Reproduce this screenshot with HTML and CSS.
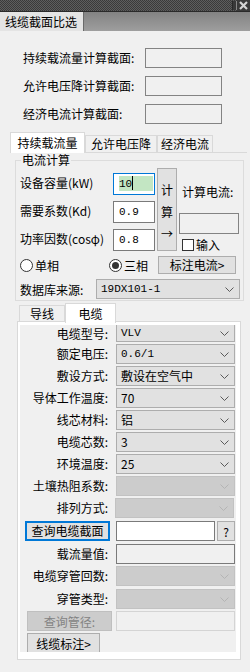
FILE: index.html
```html
<!DOCTYPE html>
<html lang="zh-CN">
<head>
    <meta charset="UTF-8">
    <meta name="viewport" content="width=device-width, initial-scale=1.0">
    <title>线缆截面比选</title>
    <link rel="stylesheet" href="styles.css">
</head>
<body>
    <div class="titlebar">
        <div class="grip"></div>
        <div class="sep"></div>
        <div class="close">
            <svg width="9" height="9" viewBox="0 0 9 9"><path d="M1 1L8 8M8 1L1 8" stroke="#d4d4d4" stroke-width="2.2"/></svg>
        </div>
    </div>
    <div class="doc-tabs">
        <div class="doc-tab">线缆截面比选</div>
        <div class="doc-rest"></div>
    </div>

    <div class="summary">
        <div class="sum-row"><span class="sum-label">持续载流量计算截面:</span><div class="ro-box"></div></div>
        <div class="sum-row"><span class="sum-label">允许电压降计算截面:</span><div class="ro-box"></div></div>
        <div class="sum-row third"><span class="sum-label">经济电流计算截面:</span><div class="ro-box"></div></div>
    </div>

    <div class="tabs top-tabs">
        <div class="tab active" style="width:75px">持续载流量</div>
        <div class="tab" style="width:72px">允许电压降</div>
        <div class="tab" style="width:56px">经济电流</div>
    </div>
    <div class="calc-page">
        <fieldset class="group">
            <legend>电流计算</legend>
            <div class="calc">
                <div class="calc-fields">
                    <label>设备容量(kW)</label>
                    <div class="num-input focus"><span class="sel">10</span><span class="caret"></span></div>
                    <label>需要系数(Kd)</label>
                    <div class="num-input">0.9</div>
                    <label>功率因数(cosφ)</label>
                    <div class="num-input">0.8</div>
                </div>
                <button class="calc-btn"><span>计</span><span>算</span><span>→</span></button>
                <div class="calc-result">
                    <div class="result-label">计算电流:</div>
                    <div class="result-box"></div>
                    <div class="check"><span class="cb"></span>输入</div>
                </div>
            </div>
            <div class="phase-row">
                <div class="radio"><span class="dot"></span>单相</div>
                <div class="radio second"><span class="dot on"></span>三相</div>
                <button class="btn mark-btn">标注电流&gt;</button>
            </div>
            <div class="db-row">
                <span class="db-label">数据库来源:</span>
                <div class="combo db-combo"><span class="mono">19DX101-1</span><svg class="chev" width="9" height="5" viewBox="0 0 9 5"><path d="M0.5 0.5L4.5 4.5L8.5 0.5" fill="none" stroke="#5a5a5a"/></svg></div>
            </div>
        </fieldset>
    </div>

    <div class="tabs cable-tabs">
        <div class="tab" style="width:46px">导线</div>
        <div class="tab active" style="width:51px">电缆</div>
    </div>
    <div class="cable-page">
        <div class="cable-panel">
            <div class="rows">
                <div class="row first"><span class="lbl">电缆型号:</span>
                    <div class="combo"><span class="mono">VLV</span><svg class="chev" width="9" height="5" viewBox="0 0 9 5"><path d="M0.5 0.5L4.5 4.5L8.5 0.5" fill="none" stroke="#5a5a5a"/></svg></div></div>
                <div class="row"><span class="lbl">额定电压:</span>
                    <div class="combo"><span class="mono">0.6/1</span><svg class="chev" width="9" height="5" viewBox="0 0 9 5"><path d="M0.5 0.5L4.5 4.5L8.5 0.5" fill="none" stroke="#5a5a5a"/></svg></div></div>
                <div class="row"><span class="lbl">敷设方式:</span>
                    <div class="combo"><span>敷设在空气中</span><svg class="chev" width="9" height="5" viewBox="0 0 9 5"><path d="M0.5 0.5L4.5 4.5L8.5 0.5" fill="none" stroke="#5a5a5a"/></svg></div></div>
                <div class="row"><span class="lbl">导体工作温度:</span>
                    <div class="combo"><span>70</span><svg class="chev" width="9" height="5" viewBox="0 0 9 5"><path d="M0.5 0.5L4.5 4.5L8.5 0.5" fill="none" stroke="#5a5a5a"/></svg></div></div>
                <div class="row"><span class="lbl">线芯材料:</span>
                    <div class="combo"><span>铝</span><svg class="chev" width="9" height="5" viewBox="0 0 9 5"><path d="M0.5 0.5L4.5 4.5L8.5 0.5" fill="none" stroke="#5a5a5a"/></svg></div></div>
                <div class="row"><span class="lbl">电缆芯数:</span>
                    <div class="combo"><span>3</span><svg class="chev" width="9" height="5" viewBox="0 0 9 5"><path d="M0.5 0.5L4.5 4.5L8.5 0.5" fill="none" stroke="#5a5a5a"/></svg></div></div>
                <div class="row"><span class="lbl">环境温度:</span>
                    <div class="combo"><span>25</span><svg class="chev" width="9" height="5" viewBox="0 0 9 5"><path d="M0.5 0.5L4.5 4.5L8.5 0.5" fill="none" stroke="#5a5a5a"/></svg></div></div>
                <div class="row"><span class="lbl">土壤热阻系数:</span>
                    <div class="combo off"><span></span><svg class="chev" width="9" height="5" viewBox="0 0 9 5"><path d="M0.5 0.5L4.5 4.5L8.5 0.5" fill="none" stroke="#b4b4b4"/></svg></div></div>
                <div class="row"><span class="lbl">排列方式:</span>
                    <div class="combo off shifted"><span></span><svg class="chev" width="9" height="5" viewBox="0 0 9 5"><path d="M0.5 0.5L4.5 4.5L8.5 0.5" fill="none" stroke="#b4b4b4"/></svg></div></div>
                <div class="row extra">
                    <div class="btn-cell"><button class="btn query-btn">查询电缆截面</button></div>
                    <div class="query">
                        <div class="white-input"></div>
                        <button class="btn help-btn">?</button>
                    </div>
                </div>
                <div class="row extra"><span class="lbl">载流量值:</span><div class="ro-field"></div></div>
                <div class="row"><span class="lbl">电缆穿管回数:</span>
                    <div class="combo off"><span></span><svg class="chev" width="9" height="5" viewBox="0 0 9 5"><path d="M0.5 0.5L4.5 4.5L8.5 0.5" fill="none" stroke="#b4b4b4"/></svg></div></div>
                <div class="row extra"><span class="lbl">穿管类型:</span>
                    <div class="combo off"><span></span><svg class="chev" width="9" height="5" viewBox="0 0 9 5"><path d="M0.5 0.5L4.5 4.5L8.5 0.5" fill="none" stroke="#b4b4b4"/></svg></div></div>
                <div class="row">
                    <div class="btn-cell"><button class="btn pipe-btn" disabled>查询管径:</button></div>
                    <div class="ro-field light"></div>
                </div>
                <div class="row last">
                    <div class="btn-cell"><button class="btn label-btn">线缆标注&gt;</button></div>
                </div>
            </div>
        </div>
    </div>
</body>
</html>
```

FILE: styles.css
```css
* {
    box-sizing: border-box;
}
body {
    margin: 0;
    width: 250px;
    height: 672px;
    overflow: hidden;
    background-color: #f0f0f0;
    font-family: "Noto Sans CJK SC", sans-serif;
    font-size: 12px;
    color: #000;
}
button {
    font-family: "Noto Sans CJK SC", sans-serif;
    font-size: 12px;
    color: #000;
    padding: 0;
}
.mono {
    font-family: "Liberation Mono", monospace;
    font-size: 11px;
}

/* title + document tab */
.titlebar {
    height: 12px;
    display: flex;
    background-color: #3a3a3a;
    background-image: conic-gradient(#5e5e5e 25%, transparent 0 50%, #5e5e5e 0 75%, transparent 0);
    background-size: 2px 2px;
    border-bottom: 1px solid #2a2a2a;
}
.grip {
    flex: 1;
}
.sep {
    width: 5px;
    margin: 1px 0;
    border-left: 1px solid #2a2a2a;
    border-right: 1px solid #8a8a8a;
    background: #3a3a3a;
}
.close {
    width: 13px;
    display: flex;
    align-items: center;
    justify-content: center;
    background: #3a3a3a;
}
.doc-tabs {
    height: 19px;
    display: flex;
}
.doc-tab {
    width: 84px;
    background-color: #e4e4e4;
    border-right: 1px solid #6a6a6a;
    padding-left: 5px;
    line-height: 19px;
    font-size: 12px;
}
.doc-rest {
    flex: 1;
    background: linear-gradient(#838383, #9e9e9e);
}

/* summary rows */
.summary {
    padding: 17px 0 0 23px;
}
.sum-row {
    display: flex;
    height: 20px;
    margin-bottom: 8px;
}
.sum-row.third {
    margin-top: 1px;
}
.sum-label {
    width: 122px;
    line-height: 20px;
}
.ro-box {
    width: 77px;
    height: 20px;
    border: 1px solid #838383;
    background: #f0f0f0;
}

/* tabs */
.tabs {
    display: flex;
    align-items: flex-end;
}
.tab {
    height: 17px;
    border: 1px solid #d9d9d9;
    border-bottom: none;
    background: #f0f0f0;
    text-align: center;
    line-height: 16px;
}
.tab.active {
    height: 21px;
    margin-bottom: -1px;
    background: #fff;
    line-height: 19px;
    position: relative;
}
.top-tabs {
    margin: 2px 0 0 10px;
    height: 20px;
}
.calc-page {
    margin-left: 10px;
    width: 237px;
    border-top: 1px solid #d9d9d9;
    padding: 0 3px 0 5px;
}
.group {
    margin: 0;
    padding: 0 0 1px 4px;
    border: 1px solid #dcdcdc;
    height: 148px;
}
.group legend {
    margin-left: 1px;
    padding: 0 1px;
    line-height: 14px;
}
.calc {
    display: flex;
    margin-top: 1px;
}
.calc-fields {
    display: grid;
    grid-template-columns: 93px 42px;
    grid-auto-rows: 22px;
    row-gap: 6px;
    margin-top: 5px;
}
.calc-fields label {
    line-height: 20px;
    white-space: nowrap;
}
.num-input {
    border: 1px solid #7a7a7a;
    background: #fff;
    padding: 2px 0 0 5px;
    font-family: "Liberation Mono", monospace;
    font-size: 11px;
    line-height: 16px;
}
.num-input.focus {
    border-color: #0078d7;
    display: flex;
    align-items: flex-start;
}
.sel {
    background: #c3e6c3;
    width: 34px;
    height: 15px;
    display: flex;
}
.caret {
    width: 1px;
    height: 14px;
    background: #000;
    margin-left: -21px;
}
.calc-btn {
    width: 20px;
    height: 83px;
    margin-left: 2px;
    border: 1px solid #adadad;
    background: #e1e1e1;
    display: flex;
    flex-direction: column;
    align-items: center;
    padding-top: 10px;
    line-height: 22px;
}
.calc-result {
    width: 60px;
    margin-left: 2px;
}
.result-label {
    margin-top: 17px;
    padding-left: 3px;
    line-height: 14px;
}
.result-box {
    margin-top: 14px;
    height: 21px;
    border: 1px solid #838383;
    background: #f0f0f0;
}
.check {
    display: flex;
    align-items: center;
    margin-top: 5px;
    padding-left: 3px;
    line-height: 12px;
    height: 12px;
}
.cb {
    width: 12px;
    height: 12px;
    border: 1px solid #333;
    background: #fff;
    margin-right: 2px;
}
.phase-row {
    display: flex;
    align-items: center;
    height: 18px;
    margin-top: 5px;
}
.radio {
    display: flex;
    align-items: center;
}
.radio.second {
    margin-left: 50px;
}
.dot {
    width: 13px;
    height: 13px;
    border: 1px solid #333;
    border-radius: 50%;
    background: #fff;
    margin-right: 2px;
    display: flex;
    align-items: center;
    justify-content: center;
}
.dot.on::after {
    content: "";
    width: 7px;
    height: 7px;
    border-radius: 50%;
    background: #333;
}
.btn {
    border: 1px solid #adadad;
    background: #e1e1e1;
}
.mark-btn {
    width: 78px;
    height: 18px;
    margin-left: 10px;
    line-height: 16px;
}
.db-row {
    display: flex;
    align-items: center;
    height: 20px;
    margin-top: 5px;
}
.db-label {
    width: 76px;
}
.combo {
    width: 119px;
    height: 20px;
    border: 1px solid #adadad;
    background: #e1e1e1;
    display: flex;
    align-items: center;
    justify-content: space-between;
    padding: 0 5px 0 4px;
    line-height: 18px;
}
.db-combo {
    width: 144px;
}
.combo.off {
    background: #cccccc;
    border-color: #c2c2c2;
}
.combo.shifted {
    margin-left: -1px;
}

/* cable page */
.cable-tabs {
    margin: 2px 0 0 19px;
    height: 18px;
}
.cable-tabs .tab {
    height: 16px;
}
.cable-tabs .tab.active {
    height: 20px;
    margin-bottom: -2px;
    border-bottom: none;
}
.cable-page {
    margin-left: 17px;
    width: 224px;
    height: 339px;
    border: 1px solid #d9d9d9;
    background: #fff;
    padding: 3px 3px 7px 2px;
}
.cable-panel {
    width: 216px;
    height: 327px;
    background: #f0f0f0;
    overflow: hidden;
}
.row {
    display: flex;
    height: 20px;
    margin-top: 2px;
}
.row.first {
    height: 17px;
    margin-top: 0;
}
.row.first .combo {
    height: 17px;
    border-top: none;
}
.row.first .lbl {
    line-height: 17px;
}
.row.extra {
    margin-top: 3px;
}
.lbl {
    width: 96px;
    text-align: right;
    padding-right: 8px;
    line-height: 20px;
    white-space: nowrap;
}
.btn-cell {
    width: 96px;
}
.query-btn {
    width: 85px;
    height: 20px;
    margin-left: 5px;
    border: 2px solid #0078d7;
    line-height: 16px;
}
.query {
    display: flex;
    width: 119px;
}
.white-input {
    width: 99px;
    border: 1px solid #7a7a7a;
    background: #fff;
}
.help-btn {
    width: 18px;
    margin-left: 2px;
}
.ro-field {
    width: 119px;
    border: 1px solid #7a7a7a;
    background: #f0f0f0;
}
.ro-field.light {
    border-color: #d4d4d4;
}
.pipe-btn {
    width: 85px;
    height: 20px;
    margin-left: 7px;
    background: #cccccc;
    border-color: #bfbfbf;
    color: #838383;
}
.label-btn {
    width: 73px;
    height: 20px;
    margin-left: 7px;
}
```
